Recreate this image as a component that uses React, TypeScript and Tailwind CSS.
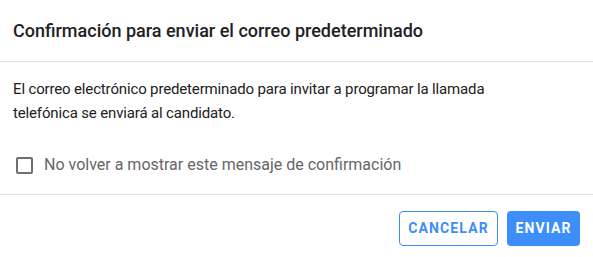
export default function App() {
  return (
    <div
      className="w-[593px] h-[257px] bg-white text-[#212121]"
      style={{ fontFamily: "Roboto, 'Noto Sans', sans-serif" }}
    >
      {/* Title */}
      <div className="h-[62px] flex items-center px-[13px] border-b border-[#e0e0e0]">
        <h2 className="text-[18px] font-medium leading-none text-[#202124]">
          Confirmación para enviar el correo predeterminado
        </h2>
      </div>

      {/* Content */}
      <div className="h-[133px] border-b border-[#e0e0e0] pl-[13px] pr-[60px] pt-[15px]">
        <p className="text-[15px] leading-[24px] tracking-[-0.01em] text-[#212121]">
          El correo electrónico predeterminado para invitar a programar la llamada telefónica se
          enviará al candidato.
        </p>
        <label className="mt-[28px] flex items-center gap-[11px] pl-[3px]">
          <span className="w-[17px] h-[17px] rounded-[2px] border-2 border-[#6f6f6f]" />
          <span className="text-[16px] leading-[24px] text-[#666666]">
            No volver a mostrar este mensaje de confirmación
          </span>
        </label>
      </div>

      {/* Actions */}
      <div className="flex justify-end gap-[9px] px-[13px] pt-[16px]">
        <button className="h-[35px] w-[99px] rounded-[4px] border border-[#3d8ef8] text-[#3d8ef8] text-[14px] font-bold tracking-[0.08em] uppercase">
          Cancelar
        </button>
        <button className="h-[35px] w-[73px] rounded-[4px] bg-[#3d8ef8] text-white text-[14px] font-bold tracking-[0.08em] uppercase">
          Enviar
        </button>
      </div>
    </div>
  );
}
